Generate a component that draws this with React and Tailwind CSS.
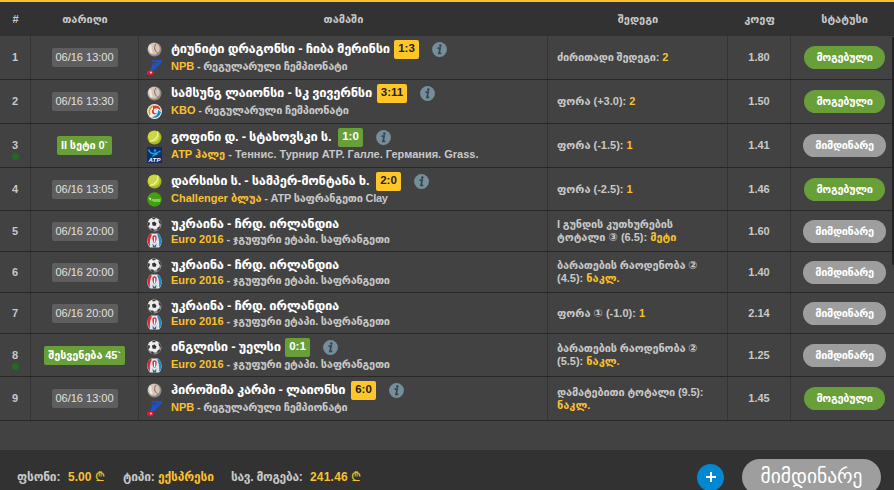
import React from 'react';

const bets = [
  { id: 1, date: '06/16 13:00', sport: 'baseball', game: 'ტიუნიტი დრაგონსი - ჩიბა მერინსი', width: 'w-[219px]', score: '1:3', badge: 'w-[25px]', league: 'NPB', stage: 'რეგულარული ჩემპიონატი', result: 'ძირითადი შედეგი:', tight: true, pick: '2', coef: '1.80', won: true, height: 'h-[44px]' },
  { id: 2, date: '06/16 13:30', sport: 'baseball', game: 'სამსუნგ ლაიონსი - სკ ვივერნსი', width: 'w-[202px]', score: '3:11', badge: 'w-[30px]', league: 'KBO', stage: 'რეგულარული ჩემპიონატი', result: 'ფორა (+3.0):', pick: '2', coef: '1.50', won: true, height: 'h-[44px]' },
  { id: 3, date: 'II სეტი 0`', live: true, sport: 'tennis', game: 'გოფინი დ. - სტახოვსკი ს.', width: 'w-[163px]', score: '1:0', badge: 'w-[25px]', league: 'ATP ჰალე', logo: 'ATP', stage: 'Теннис. Турнир ATP. Галле. Германия. Grass.', wide: true, result: 'ფორა (-1.5):', pick: '1', coef: '1.41', height: 'h-[44px]' },
  { id: 4, date: '06/16 13:05', sport: 'tennis', game: 'დარსისი ს. - სამპერ-მონტანა ხ.', width: 'w-[201px]', score: '2:0', badge: 'w-[25px]', league: 'Challenger ბლუა', logo: 'Challenger', stage: 'ATP საფრანგეთი Clay', result: 'ფორა (-2.5):', pick: '1', coef: '1.46', won: true, height: 'h-[43px]' },
  { id: 5, date: '06/16 20:00', sport: 'soccer', game: 'უკრაინა - ჩრდ. ირლანდია', width: 'w-[169px]', league: 'Euro 2016', stage: 'ჯგუფური ეტაპი. საფრანგეთი', result: 'I გუნდის კუთხურების', tight: true, rest: 'ტოტალი ③ (6.5):', pick: 'მეტი', coef: '1.60', height: 'h-[41px]' },
  { id: 6, date: '06/16 20:00', sport: 'soccer', game: 'უკრაინა - ჩრდ. ირლანდია', width: 'w-[169px]', league: 'Euro 2016', stage: 'ჯგუფური ეტაპი. საფრანგეთი', result: 'ბარათების რაოდენობა ②', tight: true, rest: '(4.5):', pick: 'ნაკლ.', coef: '1.40', height: 'h-[41px]' },
  { id: 7, date: '06/16 20:00', sport: 'soccer', game: 'უკრაინა - ჩრდ. ირლანდია', width: 'w-[169px]', league: 'Euro 2016', stage: 'ჯგუფური ეტაპი. საფრანგეთი', result: 'ფორა ① (-1.0):', pick: '1', coef: '2.14', height: 'h-[41px]' },
  { id: 8, date: 'შესვენება 45`', live: true, sport: 'soccer', game: 'ინგლისი - უელსი', width: 'w-[110px]', score: '0:1', badge: 'w-[25px]', league: 'Euro 2016', stage: 'ჯგუფური ეტაპი. საფრანგეთი', result: 'ბარათების რაოდენობა ②', tight: true, rest: '(5.5):', pick: 'ნაკლ.', coef: '1.25', height: 'h-[43px]' },
  { id: 9, date: '06/16 13:00', sport: 'baseball', game: 'ჰიროშიმა კარპი - ლაიონსი', width: 'w-[176px]', score: '6:0', badge: 'w-[25px]', league: 'NPB', stage: 'რეგულარული ჩემპიონატი', result: 'დამატებითი ტოტალი (9.5):', tight: true, rest: '', pick: 'ნაკლ.', coef: '1.45', won: true, height: 'h-[44px]' },
];

const columns = 'grid grid-cols-[31px_108px_409px_180px_63px_103px]';

const SportIcon = ({ sport }) => {
  if (sport === 'soccer') {
    return (
      <svg viewBox="0 0 15 15" className="size-[15px]">
        <circle cx="7.5" cy="7.5" r="7" fill="#8c8c8c" />
        <circle cx="6.8" cy="6.6" r="6" fill="#ececec" />
        <path d="M5 5.500L7.500 4.500L9.500 6.500L8.500 9L5.500 8.500Z" fill="#333" />
        <path d="M5 0.900L8.500 0.600L8.500 2L6 2.500ZM0.800 5.500L2.300 5L3 7L1.500 9.500L0.600 8ZM11.500 3L13.500 4.500L14.300 7.500L12 6ZM3.500 11.500L6 11.500L7.500 13.800L5 14ZM10.500 10.500L13 9.500L12.500 12L10.500 13.500Z" fill="#3c3c3c" />
      </svg>
    );
  }
  if (sport === 'tennis') {
    return (
      <svg viewBox="0 0 15 15" className="size-[15px]">
        <circle cx="7.5" cy="7.5" r="7" fill="#a9b524" />
        <circle cx="6.8" cy="6.5" r="5.8" fill="#ccd843" />
        <path d="M10.500 1.200C12 5.500 9 10.500 2.500 11.500" fill="none" stroke="#eff3b8" strokeWidth="1.100" />
      </svg>
    );
  }
  return (
    <svg viewBox="0 0 15 15" className="size-[15px]">
      <circle cx="7.5" cy="7.5" r="7" fill="#94897d" />
      <circle cx="6.8" cy="6.8" r="6" fill="#d0c8bd" />
      <path d="M3.500 3.500C3 6 3.500 9 5 11" fill="none" stroke="#eee9e2" strokeWidth="2" />
      <path d="M9 2C6.500 5 7.500 9 11 11.500" fill="none" stroke="#b0563f" strokeWidth="1" />
    </svg>
  );
};

const LeagueIcon = ({ name }) => {
  if (name === 'NPB') {
    return (
      <svg viewBox="0 0 15 15" className="size-[15px]">
        <path d="M4.500 1H14.500L6.500 9.500H4.500L7 3" fill="none" stroke="#1a55e0" strokeWidth="1.700" />
        <path d="M11 1.500L6 8.500" stroke="#1a55e0" strokeWidth="1.300" />
        <ellipse cx="3.300" cy="12.700" rx="3.300" ry="2.200" fill="#f0182c" />
        <circle cx="4" cy="12.400" r="1" fill="#ffd0d0" />
      </svg>
    );
  }
  if (name === 'KBO') {
    return (
      <svg viewBox="0 0 15 15" className="size-[15px]">
        <circle cx="7.5" cy="7.5" r="7.4" fill="#f4f2ee" />
        <path d="M7 1C1 2 0 8 3 12C4 9 2 6 5 4Z" fill="#e3a02d" />
        <path d="M6 2C11 0 14 4 13.500 7C11 3 8 4 6 6Z" fill="#d83b35" />
        <path d="M14 8C13 13 8 15 4 13C8 13 11 11 11 6Z" fill="#168fc4" />
        <path d="M5 6C4 10 8 12 10 9C8 10 6 9 7 5Z" fill="#d83b35" />
      </svg>
    );
  }
  if (name === 'ATP') {
    return (
      <svg viewBox="0 0 15 16" className="h-4 w-[15px]">
        <rect width="15" height="16" fill="#062f70" />
        <path d="M1.500 2.500C3 7 7 8 13.500 4M5.500 9.500C7 8 9 7 10.500 7" fill="none" stroke="#23a4dd" strokeWidth="1.400" />
        <circle cx="8" cy="3.500" r="1.300" fill="#23a4dd" />
        <text x="1.500" y="15" fontSize="6" fontWeight="bold" fontStyle="italic" fill="#fff" textLength="12">ATP</text>
      </svg>
    );
  }
  if (name === 'Challenger') {
    return (
      <svg viewBox="0 0 15 15" className="size-[15px]">
        <circle cx="7.5" cy="7.5" r="7.2" fill="#45a00e" />
        <path d="M2 5.500L4 8.500M4 6L3 8M5 8H13.500" stroke="#d4efc1" strokeWidth="1" />
        <path d="M6 9.500H13" stroke="#8fce67" strokeWidth="0.800" />
      </svg>
    );
  }
  return (
    <svg viewBox="0 0 15 15" className="size-[15px]">
      <path d="M4 0.500H11C15 3 16 11 12 14.500H3C-1 11 -0.500 3 4 0.500Z" fill="#dfe6ea" />
      <path d="M3.500 1C-0.500 3 -0.500 10 3 13.500C2.500 9 3 5 5 1.500Z" fill="#cf2b3a" />
      <path d="M11.500 1C15.500 4 15.500 11 12 13.500C12.500 9 12 5 10 1.500Z" fill="#2688bf" />
      <path d="M5.300 4.500C5.300 1.500 9.700 1.500 9.700 4.500C9.700 7 8.800 8 8.500 9.500H6.500C6.200 8 5.300 7 5.300 4.500Z" fill="#d63b43" />
      <path d="M7 4H8.200V9H7Z" fill="#fff" />
      <path d="M5.500 10.500L7.500 13L9.500 10.500L9 14.500H6Z" fill="#27669a" />
    </svg>
  );
};

const InfoIcon = () => (
  <svg viewBox="0 0 15 15" className="ml-[13px] size-[15px] shrink-0">
    <circle cx="7.5" cy="7.5" r="7.4" fill="#748e9b" />
    <circle cx="8.3" cy="3.6" r="1.3" fill="#37454d" />
    <path d="M5.500 6.200H8.200L7 11.300H9.300" fill="none" stroke="#37454d" strokeWidth="1.700" />
  </svg>
);

const BetRow = ({ bet }) => (
  <div className={`${columns} ${bet.height} border-b border-[#282828] *:border-r *:border-[#343434] *:last:border-r-0`}>
    <div className="flex flex-col items-center justify-center text-[11px] leading-[13px]">
      <span className={bet.live ? 'mt-2' : ''}>{bet.id}</span>
      {bet.live && <span className="mt-px size-[7px] shrink-0 rounded-full bg-[#216a22]" />}
    </div>
    <div className="flex items-center justify-center">
      <span className={`flex h-[19px] items-center justify-center whitespace-nowrap rounded-[2px] ${bet.live ? 'bg-[#689f38] px-1 text-[11px] tracking-[-0.15px] text-white' : 'w-[66px] bg-[#5e5e5e] text-[11px] font-normal text-[#e0e0e0]'}`}>
        {bet.date}
      </span>
    </div>
    <div className="pl-2 pt-1">
      <div className="flex h-[18px] items-center">
        <SportIcon sport={bet.sport} />
        <span className={`ml-[9px] shrink-0 whitespace-nowrap text-[13px] tracking-[-0.28px] text-white ${bet.width}`}>{bet.game}</span>
        {bet.score && (
          <>
            <span className={`ml-1 flex h-[19px] shrink-0 items-center justify-center rounded-[2px] text-[11.5px] ${bet.badge} ${bet.live ? 'bg-[#689f38] text-white' : 'bg-[#ffc629] text-[#222]'}`}>{bet.score}</span>
            <InfoIcon />
          </>
        )}
      </div>
      <div className={`flex items-center ${bet.score ? 'h-[18px]' : 'h-[14px]'}`}>
        <LeagueIcon name={bet.logo || bet.league} />
        <span className="ml-[9px] whitespace-nowrap pb-px text-[11px]">
          <span className="text-[#fbc02d]">{bet.league}</span>
          <span className={bet.wide ? '' : 'tracking-[-0.24px]'}> - {bet.stage}</span>
        </span>
      </div>
    </div>
    <div className="flex flex-col justify-center whitespace-nowrap pl-[9px] text-[11px] leading-[13px]">
      {bet.rest === undefined ? (
        <span className={bet.tight ? 'tracking-[-0.2px]' : ''}>{bet.result} <span className="text-[#fbc02d]">{bet.pick}</span></span>
      ) : (
        <>
          <span className={bet.tight ? 'tracking-[-0.15px]' : ''}>{bet.result}</span>
          <span>{bet.rest} <span className="text-[#fbc02d]">{bet.pick}</span></span>
        </>
      )}
    </div>
    <div className="flex items-center justify-center text-[11px]">{bet.coef}</div>
    <div className="flex items-center justify-center pl-1 text-[11px] tracking-[-0.35px] text-white">
      <span className={`flex h-[23px] items-center justify-center rounded-full ${bet.won ? 'w-[81px] bg-[#689f38]' : 'w-[83px] bg-[#9e9e9e]'}`}>
        {bet.won ? 'მოგებული' : 'მიმდინარე'}
      </span>
    </div>
  </div>
);

const App = () => (
  <div className="relative flex h-[490px] w-[894px] flex-col overflow-hidden border-t-2 border-[#fbc02d] bg-[#424242] font-['Liberation_Sans','DejaVu_Sans',sans-serif] font-bold text-[#c8c8c8]">
    <header className={`${columns} h-[34px] shrink-0 items-center bg-[#323232] text-center text-[11px]`}>
      <span>#</span>
      <span>თარიღი</span>
      <span>თამაში</span>
      <span>შედეგი</span>
      <span>კოეფ</span>
      <span className="pl-1">სტატუსი</span>
    </header>
    <main className="h-[414px] shrink-0">
      {bets.map((bet) => <BetRow key={bet.id} bet={bet} />)}
    </main>
    <div className="absolute right-0 top-[35px] h-[228px] w-0.5 rounded-full bg-[#222]" />
    <footer className="flex h-[54px] shrink-0 items-center bg-[#323232] pl-[17px] text-[12px]">
      <span className="w-[51px] whitespace-nowrap tracking-[-0.2px]">ფსონი:</span>
      <span className="w-[55px] whitespace-nowrap text-[#fbc02d]">5.00 <span className="text-[13px] font-normal">₾</span></span>
      <span className="w-[35px] whitespace-nowrap tracking-[-0.2px]">ტიპი:</span>
      <span className="w-[73px] whitespace-nowrap tracking-[-0.15px] text-[#fbc02d]">ექსპრესი</span>
      <span className="w-[79px] whitespace-nowrap tracking-[-0.3px]">სავ. მოგება:</span>
      <span className="whitespace-nowrap tracking-[0.2px] text-[#fbc02d]">241.46 <span className="text-[13px] font-normal">₾</span></span>
      <button className="ml-auto flex size-[27px] items-center justify-center rounded-full bg-[#0288d1] text-white">
        <svg viewBox="0 0 10 10" className="size-[10px]">
          <path d="M5 0V10M0 5H10" stroke="currentColor" strokeWidth="2" />
        </svg>
      </button>
      <div className="ml-[18px] mr-[13px] flex h-9 w-[139px] items-center justify-center rounded-full bg-[#9e9e9e] text-[19.5px] font-normal text-white">
        მიმდინარე
      </div>
    </footer>
  </div>
);

export default App;
